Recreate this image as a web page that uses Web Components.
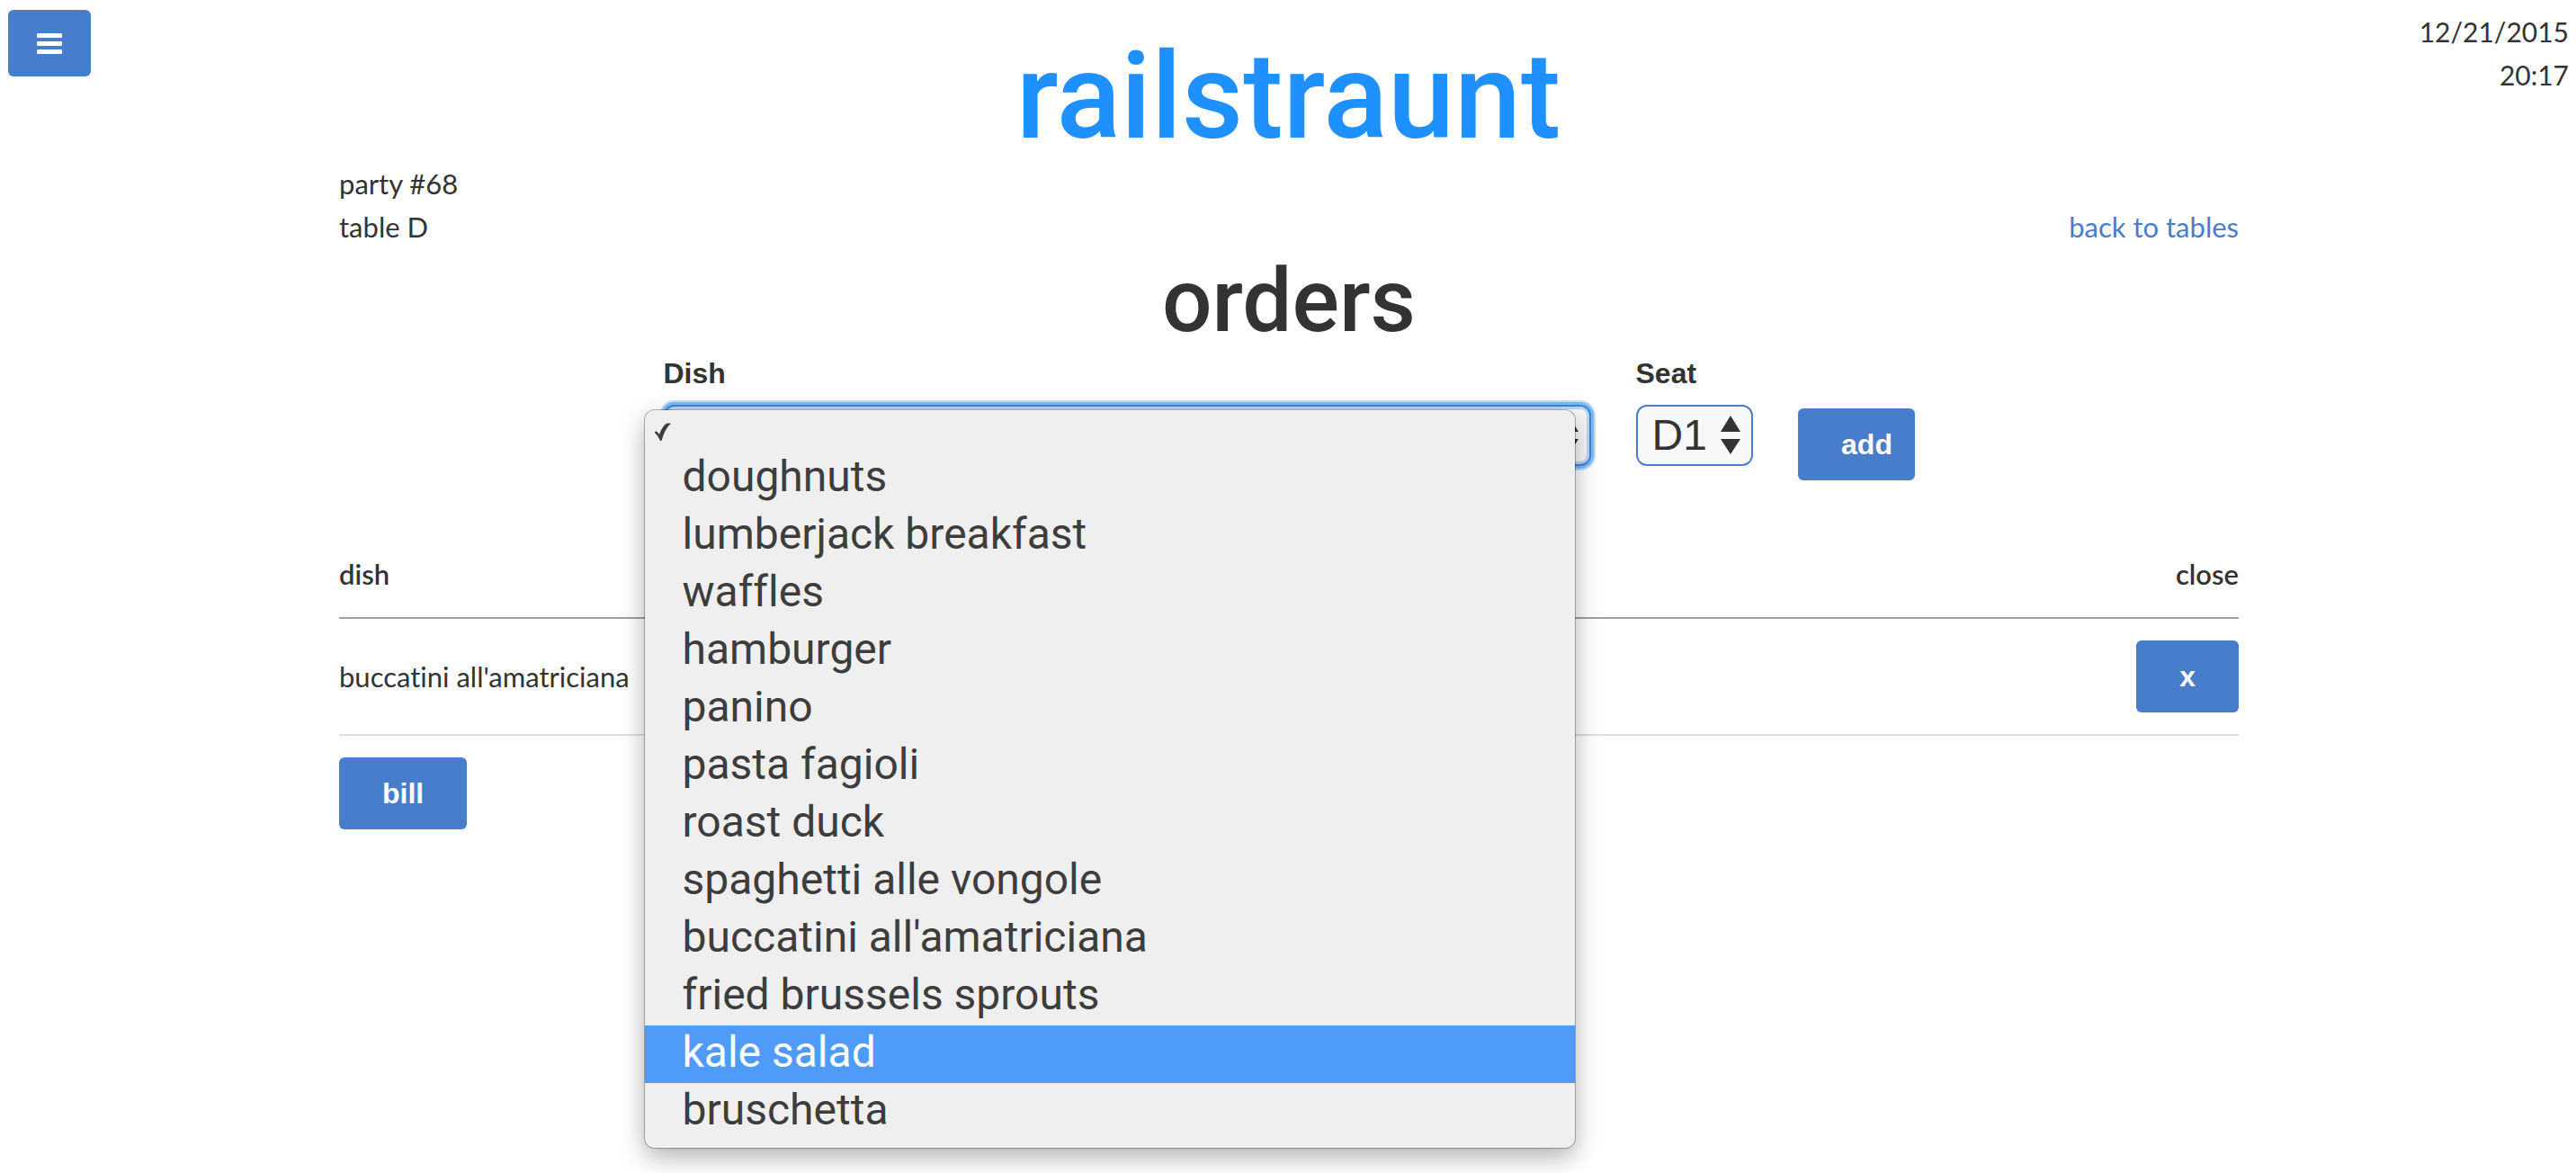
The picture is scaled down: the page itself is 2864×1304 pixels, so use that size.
<!DOCTYPE html>
<html lang="en">
<head>
<meta charset="utf-8">
<title>railstraunt</title>
<style>
  body {
    margin: 0;
    min-height: 100vh;
    background: #fff;
    color: #333;
    font: 31px/48px Lato, "Open Sans", sans-serif;
    font-variant-ligatures: none;
    --blue: #487dcb;
    --ui: "Liberation Sans", Arial, sans-serif;
    --head: Roboto, "Noto Sans", sans-serif;
  }
  main {
    display: block;
    width: 74%;
    max-width: 2112px;
    margin: 0 auto;
    padding-left: 2px;
  }
  h2 {
    margin: 0;
    padding-top: 3px;
    font: 500 98px/112px var(--head);
    text-align: center;
  }
</style>
</head>
<body>
<page-header>
  <action-button slot="menu" shape="icon" label="menu">
    <svg width="28" height="23" viewBox="0 0 28 23" fill="#fff" aria-hidden="true">
      <rect width="28" height="5" rx="1"/><rect y="9" width="28" height="5" rx="1"/><rect y="18" width="28" height="5" rx="1"/>
    </svg>
  </action-button>
  <span slot="brand">railstraunt</span>
  <span slot="date">12/21/2015</span>
  <span slot="time">20:17</span>
</page-header>
<main>
  <party-info>
    <span slot="party">party #68</span>
    <span slot="table">table D</span>
    <span slot="link">back to tables</span>
  </party-info>
  <h2>orders</h2>
  <order-form></order-form>
  <order-table></order-table>
  <action-button>bill</action-button>
</main>

<script>
function define(name, html, setup) {
  const template = document.createElement('template');
  template.innerHTML = html;
  customElements.define(name, class extends HTMLElement {
    constructor() {
      super();
      this.attachShadow({ mode: 'open' }).append(template.content.cloneNode(true));
    }
    connectedCallback() {
      if (setup) setup(this, this.shadowRoot);
    }
  });
}

define('action-button', `
  <style>
    :host { display: inline-block; vertical-align: top; }
    button {
      display: flex; align-items: center; justify-content: center;
      box-sizing: border-box; height: 80px; padding: 0 48px;
      border: 0; border-radius: 6px; background: var(--blue); color: #fff;
      font: bold 32px/80px var(--ui); cursor: pointer;
    }
    :host([shape="icon"]) button { width: 92px; height: 74px; padding: 0; }
    :host([shape="field"]) button { width: 130px; padding: 0 24px 0 48px; }
  </style>
  <button type="button"><slot></slot></button>`,
  (host, root) => {
    if (host.hasAttribute('label')) root.querySelector('button').setAttribute('aria-label', host.getAttribute('label'));
  });

define('page-header', `
  <style>
    :host { display: block; }
    header { display: grid; grid-template-columns: 1fr auto 1fr; align-items: start; padding: 11px 8px 0 9px; }
    h1 { margin: 0; padding-top: 25px; font: 500 133px/144px var(--head); color: #1e90ff; }
    .clock { display: flex; flex-direction: column; align-items: flex-end; font-size: 30px; }
  </style>
  <header>
    <slot name="menu"></slot>
    <h1><slot name="brand"></slot></h1>
    <div class="clock"><slot name="date"></slot><slot name="time"></slot></div>
  </header>`);

define('party-info', `
  <style>
    :host { display: flex; justify-content: space-between; align-items: flex-end; }
    .where { display: flex; flex-direction: column; }
    a { color: var(--blue); text-decoration: none; }
  </style>
  <div class="where"><slot name="party"></slot><slot name="table"></slot></div>
  <a href="#tables"><slot name="link"></slot></a>`);

define('select-field', `
  <style>
    :host { display: block; }
    label { display: block; margin-bottom: 11px; font: bold 32px/48px var(--ui); }
    .box { display: grid; align-items: center; position: relative; }
    select, svg { grid-area: 1 / 1; }
    select {
      appearance: none; box-sizing: border-box; width: 100%; height: 68px; margin: 0;
      padding: 0 40px 0 16px; border: 2px solid var(--blue); border-radius: 12px;
      outline: 0; background: #f8f8f8; color: #333; font: 48px/64px var(--ui);
    }
    svg { justify-self: end; margin-right: 14px; pointer-events: none; }
    :host([active]) select {
      border-color: #3a86df;
      box-shadow: 0 0 0 3px #7fb8f7, 0 0 0 5px #c3dffc, inset 0 0 0 3px #bcd5f2;
    }
  </style>
  <label for="field"></label>
  <div class="box">
    <select id="field"></select>
    <svg width="22" height="44" viewBox="0 0 22 44" fill="#333" aria-hidden="true">
      <path d="M11 0 22 18H0zM11 43 0 26H22z"/>
    </svg>
    <slot></slot>
  </div>`,
  (host, root) => {
    root.querySelector('label').textContent = host.getAttribute('label');
    root.querySelector('select').add(new Option(host.getAttribute('value')));
  });

define('dish-menu', `
  <style>
    :host {
      position: absolute; z-index: 1; top: 6px; left: -21px; right: 18px;
      box-sizing: border-box; padding: 8px 0; border-radius: 11px; background: #efefef;
      box-shadow: 0 0 0 1px rgba(0,0,0,.28), 0 10px 28px rgba(0,0,0,.32);
    }
    ul { margin: 0; padding: 0; list-style: none; color: #3d3d3d; font: 48px/60px Roboto, sans-serif; font-variant-ligatures: none; }
    li { padding: 0 0 4px 42px; }
    li.blank { height: 36px; padding: 6px 0 0 11px; box-sizing: border-box; line-height: 0; }
    li.on { background: #4e9bfa; color: #fff; }
  </style>
  <ul role="listbox" aria-label="Dish">
    <li class="blank" role="option" aria-selected="true">
      <svg width="18" height="21" viewBox="0 0 18 21" aria-hidden="true"><path d="M0 10Q2.500 8 5 13Q9 2 14 .5L18 .5Q11 7 7.500 20L6 20Q3.500 14 0 11z" fill="#3d3d3d"/></svg>
    </li>
  </ul>`,
  (host, root) => {
    const list = root.querySelector('ul');
    for (const dish of ['doughnuts', 'lumberjack breakfast', 'waffles', 'hamburger', 'panino',
      'pasta fagioli', 'roast duck', 'spaghetti alle vongole', "buccatini all'amatriciana",
      'fried brussels sprouts', 'kale salad', 'bruschetta']) {
      const item = document.createElement('li');
      item.setAttribute('role', 'option');
      item.textContent = dish;
      item.classList.toggle('on', dish === host.getAttribute('highlight'));
      list.append(item);
    }
  });

define('order-form', `
  <style>
    :host { display: block; }
    form { display: flex; align-items: flex-end; gap: 50px; max-width: 1391px; margin: 0 auto; }
    .dish { flex: 1; }
    .seat { width: 130px; }
    select-field { margin-bottom: 16px; }
  </style>
  <form>
    <select-field class="dish" label="Dish" value="" active><dish-menu highlight="kale salad"></dish-menu></select-field>
    <select-field class="seat" label="Seat" value="D1"></select-field>
    <action-button shape="field">add</action-button>
  </form>`);

define('order-table', `
  <style>
    :host { display: block; margin: 56px 0 24px; }
    table { width: 100%; border-collapse: separate; border-spacing: 0; }
    th, td { padding: 24px 0; text-align: left; font-weight: 400; border-bottom: 2px solid #dedede; }
    th { border-color: #a1a1a1; font-weight: 600; }
    th:last-child, td:last-child { text-align: right; }
  </style>
  <table>
    <thead><tr><th scope="col">dish</th><th scope="col">close</th></tr></thead>
    <tbody><tr><td>buccatini all'amatriciana</td><td><action-button>x</action-button></td></tr></tbody>
  </table>`);
</script>
</body>
</html>
